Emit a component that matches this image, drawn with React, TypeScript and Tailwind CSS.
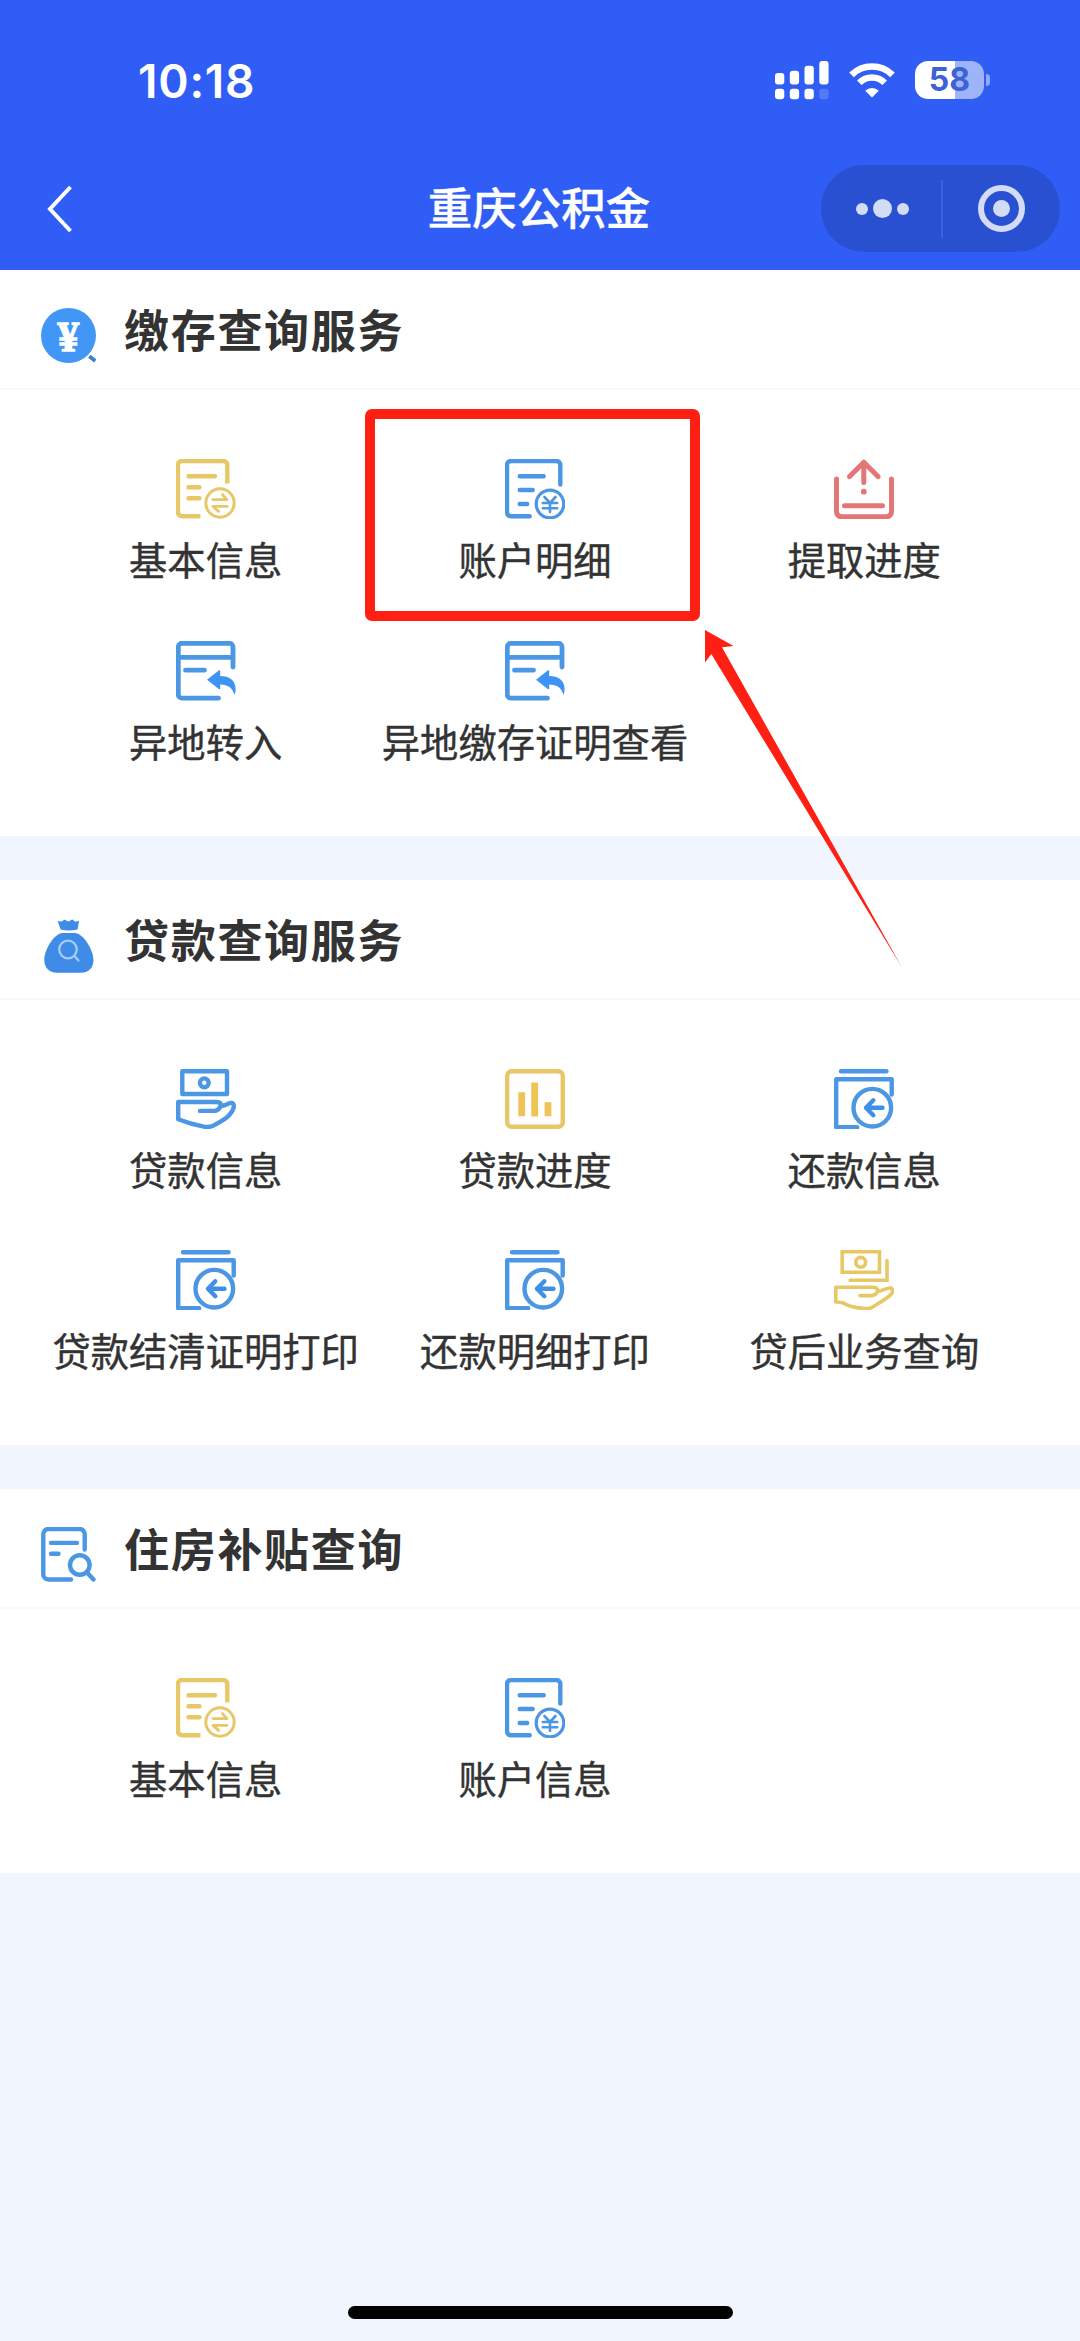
import type { ReactNode } from "react";

const BLUE = "#4b97e3";
const YELLOW = "#e8c767";
const RED = "#e57676";

type IconProps = { children: ReactNode; color: string; width?: number };

const Icon = ({ children, color, width = 4.4 }: IconProps) => (
    <svg
        viewBox="0 0 60 60"
        className="h-[60px] w-[60px] shrink-0"
        fill="none"
        stroke={color}
        strokeWidth={width}
        strokeLinecap="round"
        strokeLinejoin="round"
    >
        {children}
    </svg>
);

const BasicInfoIcon = () => (
    <Icon color={YELLOW}>
        <path d="M51.3 24.5V6a4 4 0 0 0-4-4H6a4 4 0 0 0-4 4v47.3a4 4 0 0 0 4 4h18.5" strokeLinecap="butt" />
        <path d="M12.5 17.3H39M12.5 28.3h11M12.5 39.3h11" />
        <circle cx="44" cy="44" r="14.2" strokeWidth="3" />
        <path d="M37 40.6h14l-4.5-5M51 47.4H37l5.5 5" strokeWidth="2.8" />
    </Icon>
);

const AccountIcon = () => (
    <Icon color={BLUE}>
        <path d="M55.3 25.5V6a4 4 0 0 0-4-4H6a4 4 0 0 0-4 4v47.3a4 4 0 0 0 4 4h18.7" />
        <path d="M14.7 17.3h24M14.7 31h13M14.7 45h7.5" />
        <circle cx="45" cy="45" r="13.8" strokeWidth="3.2" />
        <path d="M39.5 38l5.5 6 5.5-6M45 44v9M37.8 44h14.4M37.8 49.3h14.4" strokeWidth="2.6" />
    </Icon>
);

const WithdrawIcon = () => (
    <Icon color={RED} width={5}>
        <path d="M2.5 20v33a5 5 0 0 0 5 4.7h45a5 5 0 0 0 5-4.7V20" />
        <path d="M10.5 46.7h38M15.6 17.6L29.8 3.2 44 17.6M29.8 5v18.5" />
        <circle cx="29.8" cy="32.7" r="2.9" fill={RED} stroke="none" />
    </Icon>
);

const TransferIcon = () => (
    <Icon color={BLUE} width={4.8}>
        <path d="M57 26V6a3.7 3.7 0 0 0-3.7-3.7H6A3.7 3.7 0 0 0 2.3 6v47.5A3.7 3.7 0 0 0 6 57.2h36.5M2.3 16.3H57M9.5 29.2h19" />
        <path
            d="M31 38.7l12-9.4q1.2-.4 1.2 1v4.6c9 0 15.4 4.4 15.4 12.6 0 3-.5 5-1.2 6.3-1.7-7-6.5-10.3-14.2-10.4v4q0 1.4-1.4.6z"
            fill="#3d94f5"
            stroke="none"
        />
    </Icon>
);

const LoanInfoIcon = () => (
    <Icon color={BLUE}>
        <path d="M6.3 2.2H51V25H6.3z" />
        <circle cx="28.3" cy="13.8" r="4.4" />
        <path d="M2.2 33h38.5c3.5 0 4.3 1.7 4.3 4 6-.6 8-3.7 10.5-3 2 .3 2.7 2 2.2 4.4-1.6 6-4.5 8-7.7 10.6-4.5 3.3-9 5.6-13.5 8-2.8 1.2-5.5 1.2-8.5.7C19.5 56 10.5 53.5 2.2 50.2zM45 37c-2 3.3-3.5 4.7-6.5 4.9H24" />
    </Icon>
);

const LoanProgressIcon = () => (
    <Icon color={YELLOW}>
        <rect x="2.2" y="2.2" width="55.6" height="55.6" rx="4.5" />
        <path d="M16.7 23.3v24M29.7 13.5v34M43 33.3v14" stroke="#efc355" strokeWidth="6.8" strokeLinecap="butt" />
    </Icon>
);

const RepayIcon = () => (
    <Icon color={BLUE}>
        <path d="M7 2.3h45.5M57.7 25.5V10.2H2.2v48h21" />
        <circle cx="38.3" cy="38.7" r="18.8" />
        <path d="M48.5 38.7H32M39.3 31.3L32 38.7l7.3 7.5" stroke="#3f8fe6" />
    </Icon>
);

const PostLoanIcon = () => (
    <Icon color={YELLOW} width={3.6}>
        <path d="M8.2 1.8h37.3v20.4H8.2zM53 10.5v19.8H16.2" strokeLinejoin="miter" />
        <circle cx="26.7" cy="12.3" r="4.9" />
        <path d="M1.8 37.3h37.4c3 0 4.5 1.5 4.5 4.2 6-.8 9-4 13-3.4 2.3.3 2.3 3.8.6 5.9-3 3.8-12.3 9-20.3 14-8 1.4-20.8-.8-27-4.7-2.5-1.3-5.3-1.3-8.2-1.3zM43.7 41.5c-1.5 3-3 3.9-6 4.1H26" />
    </Icon>
);

const CoinSearchIcon = () => (
    <svg viewBox="0 0 55 55" className="h-[55px] w-[55px]">
        <circle cx="27.5" cy="27.5" r="27.5" fill="#4296f5" />
        <path d="M44 54l9-9" stroke="#fff" strokeWidth="3" />
        <path d="M48.3 48.3l6 4.7" stroke="#3b83d0" strokeWidth="4" />
        <text
            x="27.2"
            y="42.5"
            textAnchor="middle"
            fill="#fff"
            stroke="#fff"
            strokeWidth="1.4"
            className="font-['Liberation_Serif',serif] text-[43px] font-bold"
        >
            ¥
        </text>
    </svg>
);

const MoneyBagIcon = () => (
    <svg viewBox="0 0 55 55" className="h-[55px] w-[55px]">
        <path
            d="M16.5 2.5q2.5 2 5 .4 2.5-2 3-.8 2.8 2.8 5.6 0 1-1.6 3 .8 2.700 1.500 5-.4L36.600 11.500q-9 1.800-17 0zM21 15h13.500C44 17 52.500 33 52.500 42c0 8-5 12.700-12 12.700h-25C8.500 54.700 3.300 50 3.300 42 3.300 33 11.500 17 21 15z"
            fill="#3f8ce8"
        />
        <g fill="none" stroke="#a5cdf8" strokeWidth="2.2" strokeLinecap="round">
            <circle cx="27" cy="31.5" r="8.8" />
            <path d="M33.5 38l4 4.5" />
        </g>
    </svg>
);

const SubsidyIcon = () => (
    <svg
        viewBox="0 0 55 55"
        className="h-[55px] w-[55px]"
        fill="none"
        stroke={BLUE}
        strokeWidth="4.4"
        strokeLinecap="round"
        strokeLinejoin="round"
    >
        <path d="M43.7 22.5V7a5 5 0 0 0-5-5H7.3a5 5 0 0 0-5 5v40.5a5 5 0 0 0 5 5H30M10 15.9h26M10 26.7h7.5" />
        <circle cx="38.8" cy="38" r="9.8" />
        <path d="M46 45.5l6.5 7" />
    </svg>
);

type Item = { label: string; icon: ReactNode; highlighted?: boolean };
type SectionData = { title: string; icon: ReactNode; items: Item[] };

const sections: SectionData[] = [
    {
        title: "缴存查询服务",
        icon: <CoinSearchIcon />,
        items: [
            { label: "基本信息", icon: <BasicInfoIcon /> },
            { label: "账户明细", icon: <AccountIcon />, highlighted: true },
            { label: "提取进度", icon: <WithdrawIcon /> },
            { label: "异地转入", icon: <TransferIcon /> },
            { label: "异地缴存证明查看", icon: <TransferIcon /> },
        ],
    },
    {
        title: "贷款查询服务",
        icon: <MoneyBagIcon />,
        items: [
            { label: "贷款信息", icon: <LoanInfoIcon /> },
            { label: "贷款进度", icon: <LoanProgressIcon /> },
            { label: "还款信息", icon: <RepayIcon /> },
            { label: "贷款结清证明打印", icon: <RepayIcon /> },
            { label: "还款明细打印", icon: <RepayIcon /> },
            { label: "贷后业务查询", icon: <PostLoanIcon /> },
        ],
    },
    {
        title: "住房补贴查询",
        icon: <SubsidyIcon />,
        items: [
            { label: "基本信息", icon: <BasicInfoIcon /> },
            { label: "账户信息", icon: <AccountIcon /> },
        ],
    },
];

const StatusBar = () => (
    <div className="flex h-[160px] items-start justify-between pt-[61px] pr-[90px] pl-[138px]">
        <span className="-mt-[8px] font-['Inter',sans-serif] text-[46px] leading-[56px] font-semibold tracking-[0.8px]">
            10:18
        </span>
        <div className="flex items-start">
            <svg viewBox="0 0 54 39" className="h-[39px] w-[54px]" fill="#fff">
                <rect x="0" y="12" width="9.3" height="11.5" rx="3" />
                <rect x="14.8" y="9.7" width="9.3" height="13.8" rx="3" />
                <rect x="29.5" y="4.7" width="9.3" height="18.8" rx="3" />
                <rect x="44.3" y="0" width="9.3" height="23.5" rx="3" />
                <rect x="0" y="27.7" width="9.3" height="10.6" rx="3" />
                <rect x="14.8" y="27.7" width="9.3" height="10.6" rx="3" />
                <rect x="29.5" y="27.7" width="9.3" height="10.6" rx="3" />
                <rect x="44.3" y="27.7" width="9.3" height="10.6" rx="3" opacity="0.18" />
            </svg>
            <svg viewBox="0 0 46 36" className="mt-[1px] ml-[20px] h-[36px] w-[46px]" fill="none" stroke="#fff">
                <path d="M2.5 12.8a29.3 29.3 0 0 1 41 0" strokeWidth="6.6" />
                <path d="M10.3 20.8a18 18 0 0 1 25.4 0" strokeWidth="6.4" />
                <path d="M23 35.5l-6.8-6.8a9.7 9.7 0 0 1 13.6 0z" fill="#fff" stroke="none" />
            </svg>
            <div className="ml-[20px] flex items-center gap-[2px]">
                <div className="flex h-[38px] w-[69px] items-center justify-center rounded-[13px] bg-[linear-gradient(90deg,#fff_57.5%,#9eb4f9_57.5%)] font-['Inter',sans-serif] text-[32px] leading-none font-bold text-[#3c62d6]">
                    58
                </div>
                <div className="h-[12px] w-[4px] rounded-r-full bg-[#8fa9f9]" />
            </div>
        </div>
    </div>
);

const NavBar = () => (
    <div className="grid h-[109px] grid-cols-[1fr_auto_1fr] items-start">
        <svg
            viewBox="0 0 26 48"
            className="mt-[25px] ml-[47px] h-[48px] w-[26px]"
            fill="none"
            stroke="#fff"
            strokeWidth="4"
        >
            <path d="M23.5 2L3 24l20.5 22" />
        </svg>
        <h1 className="mt-[16px] mr-[2px] text-[44.5px] leading-[60px] font-medium [-webkit-text-stroke:0.4px_#fff]">
            重庆公积金
        </h1>
        <div className="mt-[5px] mr-[20px] flex h-[87px] w-[239px] items-center justify-self-end rounded-full bg-[#2850d1]">
            <div className="flex flex-1 items-center justify-center gap-[5px] pl-[3px]">
                <i className="h-[12px] w-[12px] rounded-full bg-[#d3dcf7]" />
                <i className="h-[19px] w-[19px] rounded-full bg-[#d3dcf7]" />
                <i className="h-[12px] w-[12px] rounded-full bg-[#d3dcf7]" />
            </div>
            <div className="h-[58px] w-[2px] bg-[#3b62dc]" />
            <div className="flex flex-1 items-center justify-center">
                <div className="flex h-[47px] w-[47px] items-center justify-center rounded-full border-[6px] border-[#d3dcf7]">
                    <i className="h-[17px] w-[17px] rounded-full bg-[#d3dcf7]" />
                </div>
            </div>
        </div>
    </div>
);

// Callout drawn over the highlighted entry: a frame and an arrow pointing to its corner
const Callout = () => (
    <>
        <div className="absolute -top-[50px] left-[-5.5px] z-10 h-[212px] w-[335px] rounded-[7px] border-[10px] border-[#ff2013]" />
        <svg viewBox="0 0 198 338" className="absolute top-[171px] left-[334.5px] z-10 h-[338px] w-[198px]" fill="#ff2013">
            <path d="M0 0l28.5 16-11.5 1.3 180 320.2L6.3 24 0 32.5z" />
        </svg>
    </>
);

const Section = ({ title, icon, items }: SectionData) => (
    <section className="bg-white pb-[13.5px]">
        <div className="flex h-[120px] items-start gap-[28px] border-b-2 border-[#f8f9fa] pl-[41px]">
            <div className="mt-[38px]">{icon}</div>
            <h2 className="mt-[29px] text-[45px] leading-[60px] font-bold tracking-[1.7px]">{title}</h2>
        </div>
        <div className="grid grid-cols-3 pt-[69px] pr-[51px] pl-[41px]">
            {items.map((item) => (
                <div key={item.label} className="relative flex h-[181.5px] flex-col items-center">
                    {item.icon}
                    <span className="mt-[13px] text-[38.3px] leading-[54px] whitespace-nowrap [-webkit-text-stroke:0.4px_#333]">
                        {item.label}
                    </span>
                    {item.highlighted && <Callout />}
                </div>
            ))}
        </div>
    </section>
);

export default function App() {
    return (
        <main className="flex h-[2341px] w-[1080px] flex-col overflow-hidden bg-[#f1f5fe] font-['Noto_Sans_CJK_SC',sans-serif] text-[#333]">
            <header className="h-[270px] shrink-0 bg-[#2f5df5] text-white">
                <StatusBar />
                <NavBar />
            </header>
            <div className="flex flex-col gap-[44px]">
                {sections.map((section) => (
                    <Section key={section.title} {...section} />
                ))}
            </div>
            <div className="mt-auto mb-[22px] h-[13px] w-[385px] self-center rounded-full bg-black" />
        </main>
    );
}
